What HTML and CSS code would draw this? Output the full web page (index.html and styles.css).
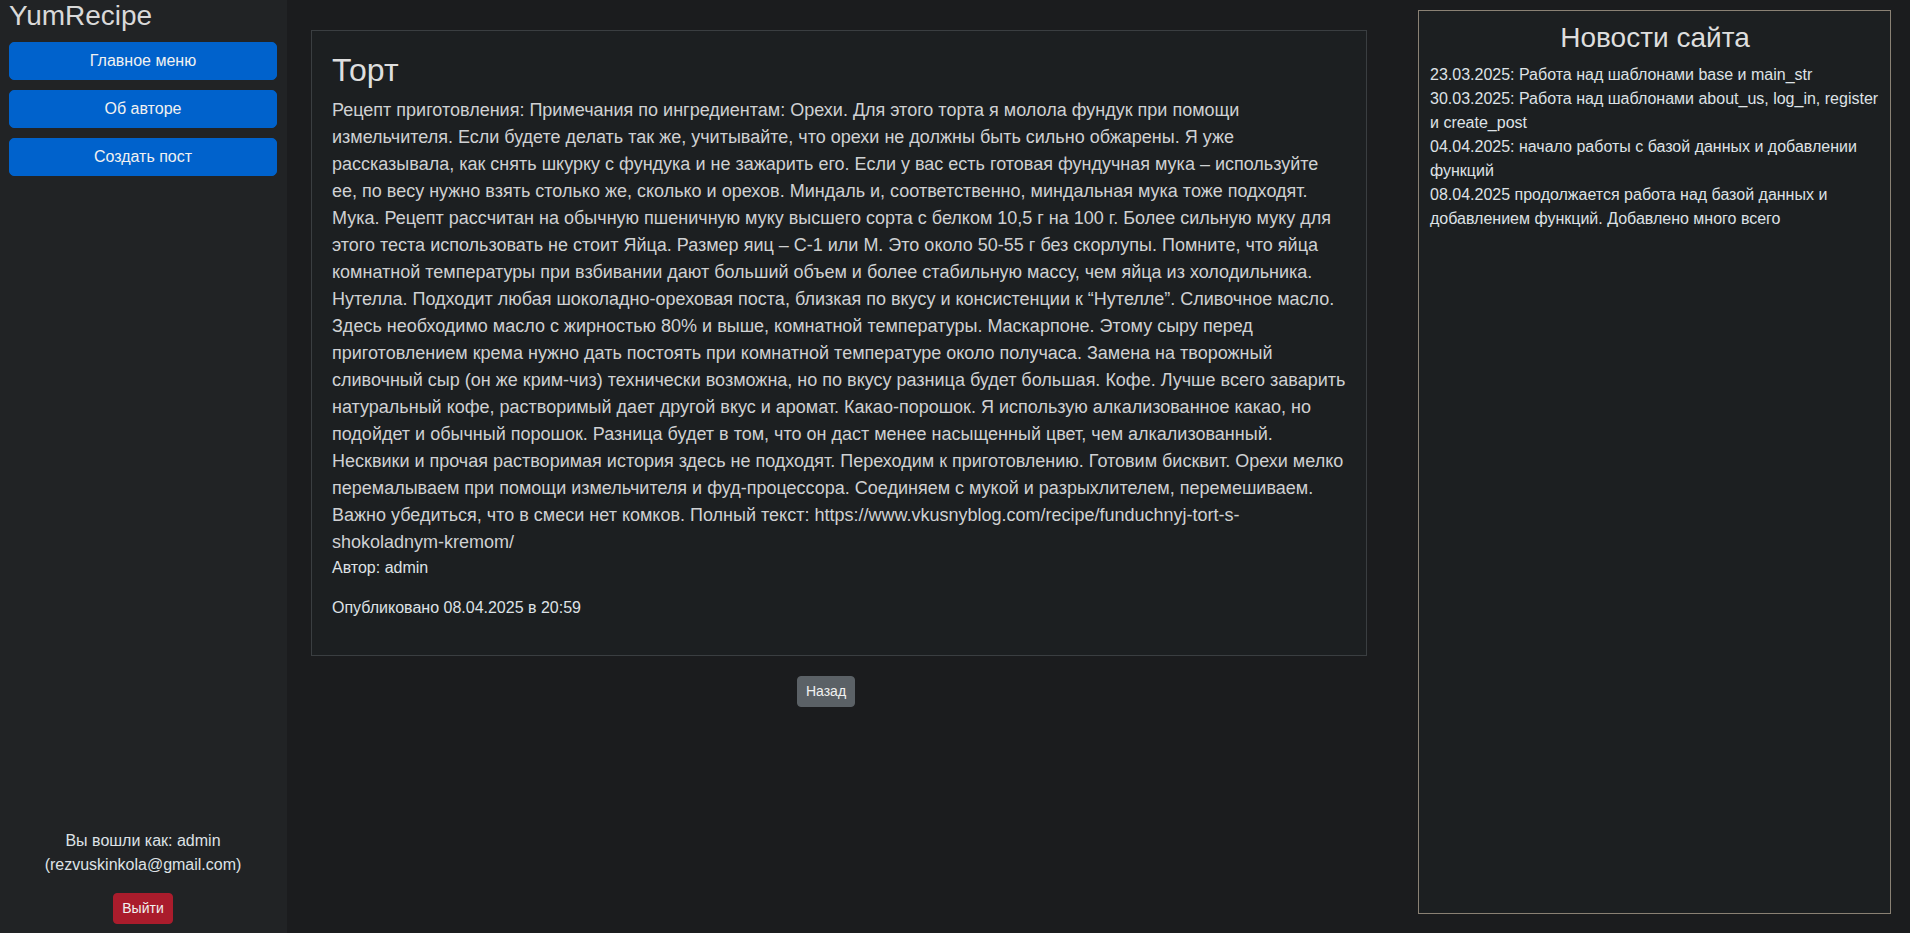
FILE: index.html
```html
<!DOCTYPE html>
<html lang="ru">
<head>
<meta charset="utf-8">
<title>YumRecipe</title>
<link rel="stylesheet" href="styles.css">
</head>
<body>
<div class="layout">
  <aside class="sidebar">
    <div class="sidebar-top">
      <h3 class="brand">YumRecipe</h3>
      <nav class="nav">
        <a class="btn btn-primary" href="#">Главное меню</a>
        <a class="btn btn-primary" href="#">Об авторе</a>
        <a class="btn btn-primary" href="#">Создать пост</a>
      </nav>
    </div>
    <div class="sidebar-bottom">
      <p class="user">Вы вошли как: admin<br>(rezvuskinkola@gmail.com)</p>
      <a class="btn btn-sm btn-danger" href="#">Выйти</a>
    </div>
  </aside>

  <main class="main">
    <article class="card">
      <h2 class="post-title">Торт</h2>
      <div class="post-body">Рецепт приготовления: Примечания по ингредиентам: Орехи. Для этого торта я молола фундук при помощи измельчителя. Если будете делать так же, учитывайте, что орехи не должны быть сильно обжарены. Я уже рассказывала, как снять шкурку с фундука и не зажарить его. Если у вас есть готовая фундучная мука – используйте ее, по весу нужно взять столько же, сколько и орехов. Миндаль и, соответственно, миндальная мука тоже подходят. Мука. Рецепт рассчитан на обычную пшеничную муку высшего сорта с белком 10,5 г на 100 г. Более сильную муку для этого теста использовать не стоит Яйца. Размер яиц – С-1 или М. Это около 50-55 г без скорлупы. Помните, что яйца комнатной температуры при взбивании дают больший объем и более стабильную массу, чем яйца из холодильника. Нутелла. Подходит любая шоколадно-ореховая поста, близкая по вкусу и консистенции к “Нутелле”. Сливочное масло. Здесь необходимо масло с жирностью 80% и выше, комнатной температуры. Маскарпоне. Этому сыру перед приготовлением крема нужно дать постоять при комнатной температуре около получаса. Замена на творожный сливочный сыр (он же крим-чиз) технически возможна, но по вкусу разница будет большая. Кофе. Лучше всего заварить натуральный кофе, растворимый дает другой вкус и аромат. Какао-порошок. Я использую алкализованное какао, но подойдет и обычный порошок. Разница будет в том, что он даст менее насыщенный цвет, чем алкализованный. Несквики и прочая растворимая история здесь не подходят. Переходим к приготовлению. Готовим бисквит. Орехи мелко перемалываем при помощи измельчителя и фуд-процессора. Соединяем с мукой и разрыхлителем, перемешиваем. Важно убедиться, что в смеси нет комков. Полный текст: https://www.vkusnyblog.com/recipe/funduchnyj-tort-s-shokoladnym-kremom/</div>
      <p class="meta">Автор: admin</p>
      <p class="meta">Опубликовано 08.04.2025 в 20:59</p>
    </article>
    <div class="back-row">
      <a class="btn btn-sm btn-secondary" href="#">Назад</a>
    </div>
  </main>

  <aside class="news">
    <h3 class="news-title">Новости сайта</h3>
    <div class="news-item">23.03.2025: Работа над шаблонами base и main_str</div>
    <div class="news-item">30.03.2025: Работа над шаблонами about_us, log_in, register и create_post</div>
    <div class="news-item">04.04.2025: начало работы с базой данных и добавлении функций</div>
    <div class="news-item">08.04.2025 продолжается работа над базой данных и добавлением функций. Добавлено много всего</div>
  </aside>
</div>
</body>
</html>
```

FILE: styles.css
```css
* {
  box-sizing: border-box;
}

html, body {
  margin: 0;
  height: 100%;
}

body {
  background: #1b1c1e;
  color: #dee2e6;
  font-family: "Liberation Sans", Arial, sans-serif;
  font-size: 16px;
  line-height: 1.5;
}

.layout {
  display: flex;
  height: 100vh;
}

.sidebar {
  width: 287px;
  flex: none;
  background: #212325;
  display: flex;
  flex-direction: column;
  justify-content: space-between;
  padding: 0 10px 9px 9px;
}

.brand {
  margin: 0 0 10px;
  font-size: 28px;
  font-weight: 400;
  line-height: normal;
  color: #d9d9d9;
}

.nav {
  display: flex;
  flex-direction: column;
  gap: 10px;
}

.btn {
  display: inline-block;
  text-align: center;
  text-decoration: none;
  border: 1px solid transparent;
  border-radius: 5px;
  padding: 6px 12px;
  font-size: 16px;
  line-height: 24px;
  color: #f1f1f1;
}

.btn-primary {
  display: block;
  background: #0062cc;
  border-color: #0062cc;
}

.btn-sm {
  padding: 4px 8px;
  font-size: 14px;
  line-height: 21px;
  border-radius: 4px;
}

.btn-danger {
  background: #aa1c2c;
  border-color: #aa1c2c;
}

.btn-secondary {
  background: #5b6166;
  border-color: #5b6166;
}

.sidebar-bottom {
  text-align: center;
}

.user {
  margin: 0 0 16px;
  color: #dee2e6;
}

.main {
  flex: none;
  padding: 30px 0 0 24px;
}

.card {
  width: 1056px;
  background: #1c1f21;
  border: 1px solid #3a3e41;
  padding: 20px 20px 19px;
}

.post-title {
  margin: 0 0 8px;
  font-size: 32px;
  font-weight: 400;
  line-height: 1.2;
  color: #dedede;
}

.post-body {
  font-size: 18px;
  line-height: 27px;
  color: #cfd1d3;
}

.meta {
  margin: 0 0 16px;
  font-size: 16px;
  line-height: 24px;
  color: #dee2e6;
}

.back-row {
  width: 1030px;
  text-align: center;
  margin-top: 20px;
}

.news {
  width: 473px;
  flex: none;
  margin: 10px 19px 19px auto;
  background: #1c1f21;
  border: 1px solid #8a8174;
  padding: 10px 10px 10px 11px;
}

.news-title {
  margin: 0 0 8px;
  text-align: center;
  font-size: 28px;
  font-weight: 400;
  line-height: 1.2;
  color: #dedede;
}

.news-item {
  font-size: 16px;
  line-height: 24px;
  color: #dee2e6;
}
```
